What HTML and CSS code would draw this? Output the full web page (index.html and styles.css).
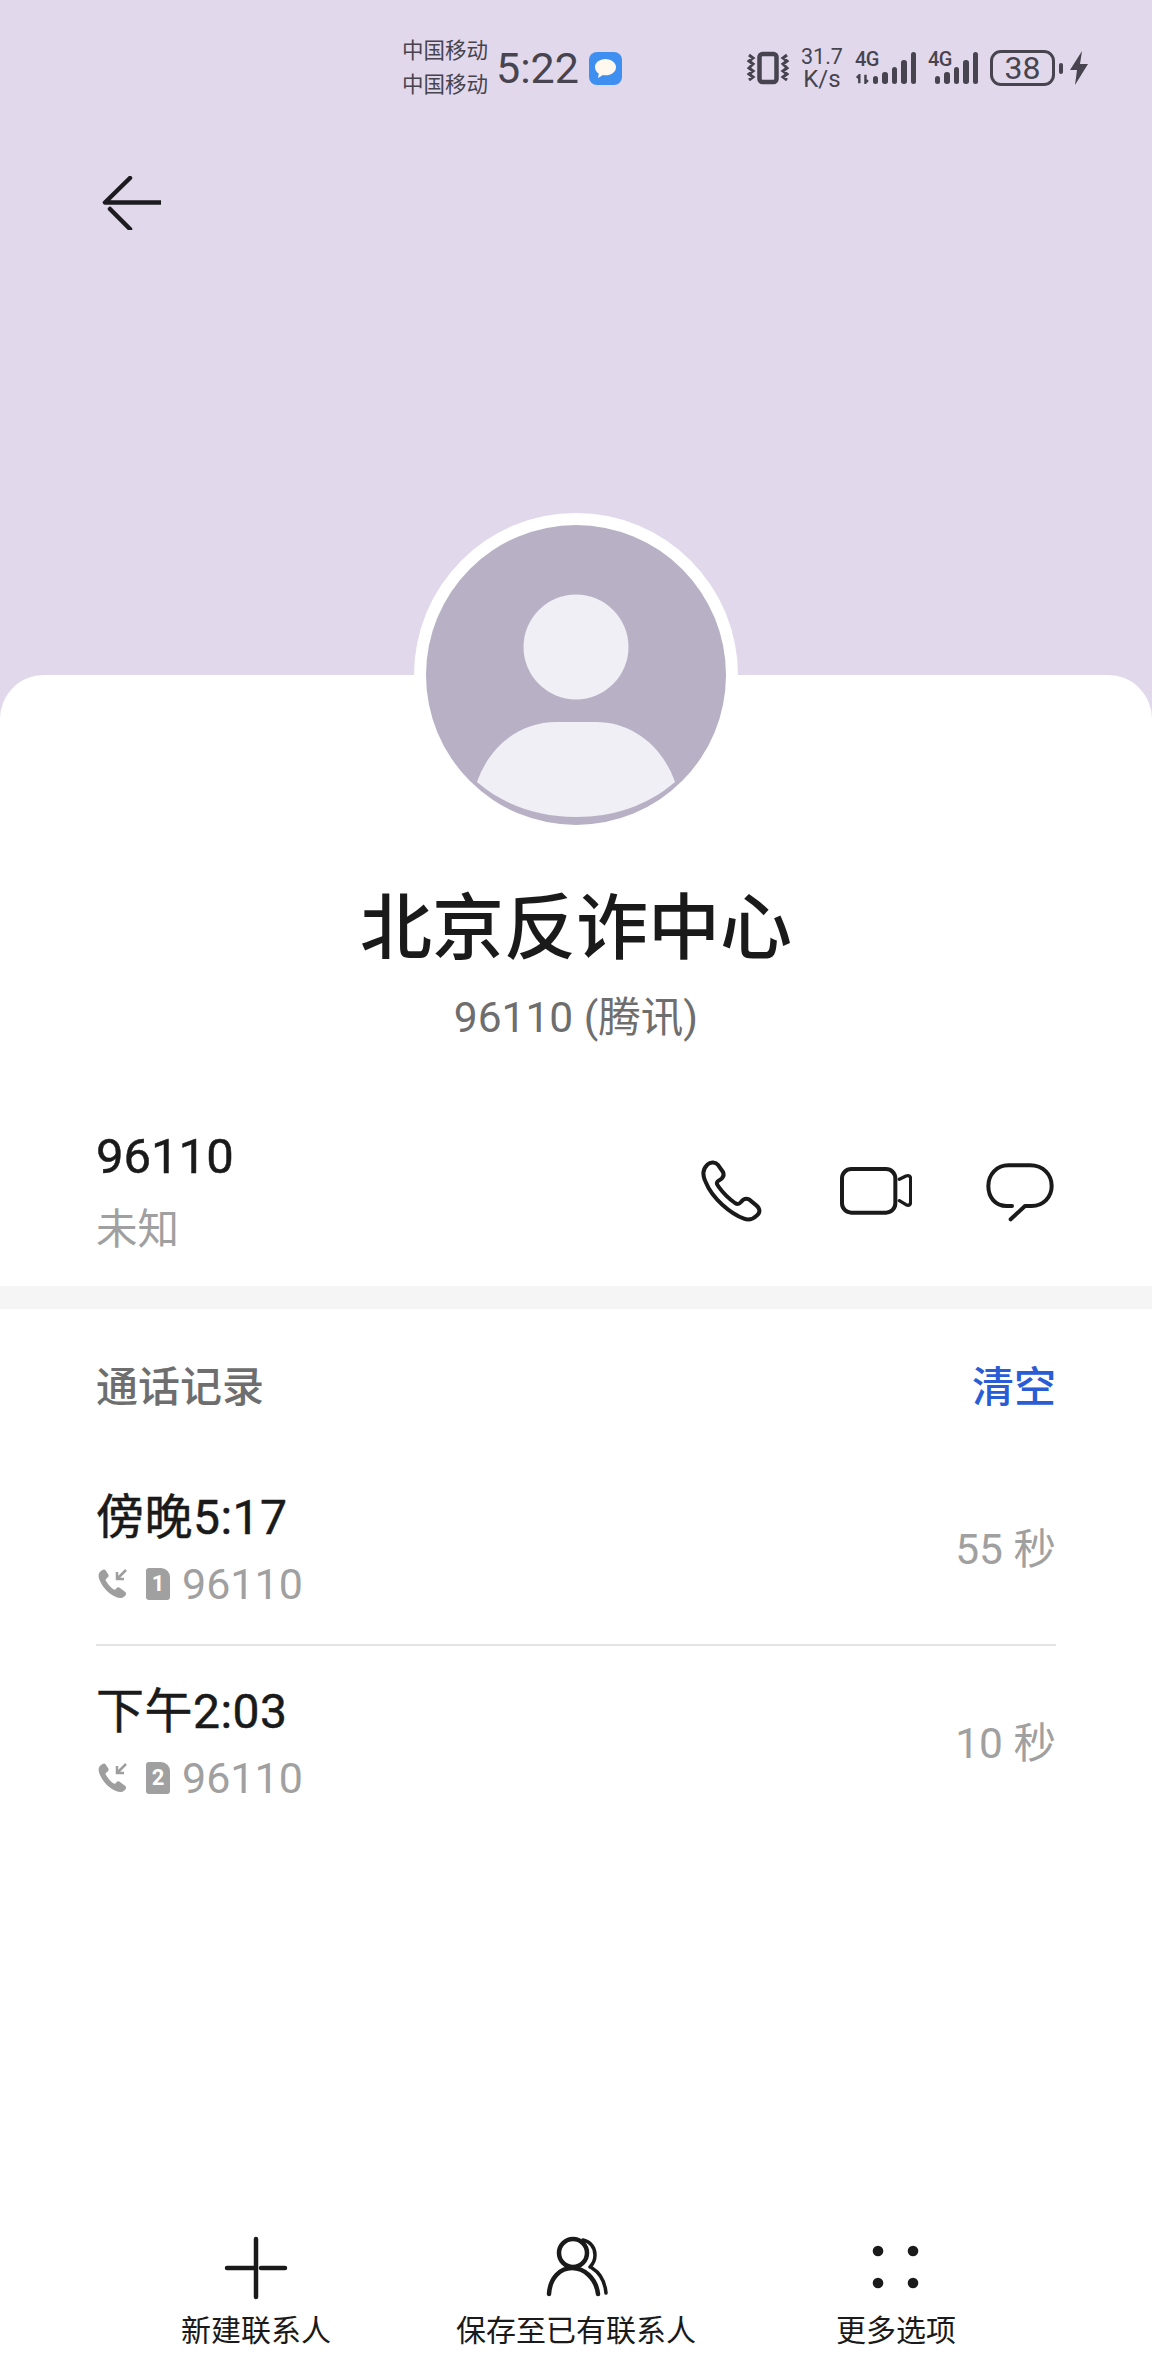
FILE: index.html
```html
<!DOCTYPE html>
<html lang="zh-CN">
<head>
<meta charset="utf-8">
<title>北京反诈中心</title>
<link rel="stylesheet" href="styles.css">
</head>
<body>
<div class="page">
  <header class="hero">
    <div class="status">
      <div class="carriers"><span>中国移动</span><span>中国移动</span></div>
      <span class="time">5:22</span>
      <svg class="msg" viewBox="0 0 33 33"><rect width="33" height="33" rx="8" fill="#3f8ff0"/><path d="M16.5 7C10.6 7 6 10.6 6 15.2c0 2.6 1.5 4.9 3.8 6.4L9 26l5-2.9c.8.2 1.6.2 2.5.2 5.9 0 10.5-3.6 10.500-8.100S22.400 7 16.500 7z" fill="#fff8ee"/></svg>
      <div class="sys">
        <svg class="vib" viewBox="0 0 42 34"><rect x="12.500" y="3" width="17" height="28" rx="3" fill="none" stroke="#47434f" stroke-width="4.500"/><path d="M2 4l4 3-4 3 4 3-4 4 4 3-4 3 4 3-4 3M40 4l-4 3 4 3-4 3 4 4-4 3 4 3-4 3 4 3" fill="none" stroke="#47434f" stroke-width="3"/></svg>
        <div class="speed"><span>31.7</span><span class="unit">K/s</span></div>
        <div class="sig sig-a">
          <span class="g">4G</span>
          <svg class="arrows" viewBox="0 0 26 16"><path d="M7 15V2L3 6M17 1v13l4-4" fill="none" stroke="#47434f" stroke-width="4"/></svg>
          <div class="bars"><i class="b1"></i><i class="b2"></i><i class="b3"></i><i class="b4"></i><i class="b5"></i></div>
        </div>
        <div class="sig sig-b">
          <span class="g">4G</span>
          <div class="bars"><i class="b1"></i><i class="b2"></i><i class="b3"></i><i class="b4"></i><i class="b5"></i></div>
        </div>
        <div class="batt"><span>38</span></div>
        <i class="tip"></i>
        <svg class="bolt" viewBox="0 0 18 34"><path d="M12 0L0 19h7L5 34 18 13h-8z" fill="#47434f"/></svg>
      </div>
    </div>
    <button class="back" aria-label="返回">
      <svg viewBox="0 0 60 54"><path d="M29 2L4 26.500H60M9 33L29 53" fill="none" stroke="#1d1b20" stroke-width="4.500" stroke-linecap="round" stroke-linejoin="round"/></svg>
    </button>
  </header>

  <main class="card">
    <div class="avatar">
      <svg viewBox="0 0 300 300">
        <circle cx="150" cy="150" r="150" fill="#b8b0c5"/>
        <circle cx="150" cy="122" r="52.500" fill="#f0eff5"/>
        <path d="M51 257C64 220 95 197 130 197h40c35 0 66 23 79 60-28 24-62 35-99 35s-71-11-99-35z" fill="#f0eff5"/>
      </svg>
    </div>
    <h1 class="name">北京反诈中心</h1>
    <p class="sub">96110 (腾讯)</p>

    <section class="contact">
      <div class="contact-text">
        <div class="num">96110</div>
        <div class="loc">未知</div>
      </div>
      <div class="actions">
        <svg viewBox="111 102 216 216"><path d="M145 128C155 118 170 120 178 130L192 150C196 158 194 164 188 170L176 178C172 182 174 188 178 193C190 210 210 230 228 243C236 248 240 247 246 240C252 232 260 228 270 232L292 250C304 260 304 272 294 280C284 290 270 296 255 290C215 275 160 230 140 180C128 155 132 140 145 128Z" fill="none" stroke="#1a1a1a" stroke-width="12" stroke-linejoin="round"/></svg>
        <svg viewBox="540 102 216 216"><rect x="546" y="141" width="160" height="131" rx="28" fill="none" stroke="#1a1a1a" stroke-width="12"/><path d="M718 172L738 162Q752 158 752 172V238Q752 254 738 248L718 236" fill="none" stroke="#1a1a1a" stroke-width="10" stroke-linecap="round" stroke-linejoin="round"/></svg>
        <svg viewBox="972 102 216 216"><path d="M1056 252H1040C1005 252 985 225 985 192C985 158 1010 130 1045 130H1110C1150 130 1175 158 1175 192C1175 225 1150 252 1115 252H1095L1052 292" fill="none" stroke="#1a1a1a" stroke-width="12" stroke-linecap="round" stroke-linejoin="round"/></svg>
      </div>
    </section>

    <div class="band"></div>

    <section class="log">
      <div class="log-head"><span class="log-title">通话记录</span><span class="clear">清空</span></div>
      <div class="log-row">
        <div>
          <div class="when">傍晚5:17</div>
          <div class="meta">
            <svg class="incall" viewBox="0 0 30 32"><path d="M3 3c-3 2-3 6-1 10 3 7 9 13 16 16 4 2 7 1 9-1 2-2 1-4-1-5l-4-3c-1-1-3-1-4 1-1 1-2 1-3 0-3-2-5-5-7-8-1-1 0-2 1-3 2-1 2-3 1-4L8 3C7 1 5 1 3 3z" fill="#9e9e9e"/><path d="M28 2L19 11M19 4v7h7" fill="none" stroke="#9e9e9e" stroke-width="2.500"/></svg>
            <span class="sim">1</span>
            <span class="dial">96110</span>
          </div>
        </div>
        <span class="dur">55 秒</span>
      </div>
      <div class="log-row last">
        <div>
          <div class="when">下午2:03</div>
          <div class="meta">
            <svg class="incall" viewBox="0 0 30 32"><path d="M3 3c-3 2-3 6-1 10 3 7 9 13 16 16 4 2 7 1 9-1 2-2 1-4-1-5l-4-3c-1-1-3-1-4 1-1 1-2 1-3 0-3-2-5-5-7-8-1-1 0-2 1-3 2-1 2-3 1-4L8 3C7 1 5 1 3 3z" fill="#9e9e9e"/><path d="M28 2L19 11M19 4v7h7" fill="none" stroke="#9e9e9e" stroke-width="2.500"/></svg>
            <span class="sim">2</span>
            <span class="dial">96110</span>
          </div>
        </div>
        <span class="dur">10 秒</span>
      </div>
    </section>

    <nav class="tabs">
      <div class="tab">
        <svg viewBox="0 0 64 64"><path d="M32 3V61M3 32H30M37 32H61" fill="none" stroke="#1a1a1a" stroke-width="4.500" stroke-linecap="round"/></svg>
        <span>新建联系人</span>
      </div>
      <div class="tab">
        <svg viewBox="0 0 64 64"><circle cx="29" cy="17" r="14" fill="none" stroke="#1a1a1a" stroke-width="4.500"/><path d="M5 58C6 42 16 32 28 32S52 42 54 58" fill="none" stroke="#1a1a1a" stroke-width="4.500" stroke-linecap="round"/><path d="M39 4C47 6 51 12 51 19C51 24 49 28 46 31M48 32C56 37 61 46 62 57" fill="none" stroke="#1a1a1a" stroke-width="3.500" stroke-linecap="round"/></svg>
        <span>保存至已有联系人</span>
      </div>
      <div class="tab">
        <svg viewBox="0 0 64 64"><g fill="#1a1a1a"><circle cx="14" cy="15" r="5.300"/><circle cx="49" cy="15" r="5.300"/><circle cx="14" cy="47" r="5.300"/><circle cx="49" cy="47" r="5.300"/></g></svg>
        <span>更多选项</span>
      </div>
    </nav>
  </main>
</div>
</body>
</html>
```

FILE: styles.css
```css
* { box-sizing: border-box; }
html, body { margin: 0; padding: 0; }
body {
  font-family: Roboto, "Noto Sans CJK SC", sans-serif;
  background: #e1d9eb;
  color: #1a1a1a;
}
.page { width: 1152px; height: 2376px; display: flex; flex-direction: column; overflow: hidden; }

.hero { height: 675px; flex: none; }
.status { display: flex; align-items: center; height: 136px; padding: 0 64px 0 402px; color: #47434f; }
.carriers { display: flex; flex-direction: column; font-size: 21.500px; line-height: 34px; width: 94px; flex: none; white-space: nowrap; }
.time { font-size: 43px; line-height: 50px; width: 93px; flex: none; }
.msg { width: 33px; height: 33px; flex: none; }
.sys { margin-left: auto; display: flex; align-items: center; }
.vib { width: 42px; height: 34px; flex: none; }
.speed { display: flex; flex-direction: column; align-items: center; font-size: 21.500px; line-height: 22px; width: 42px; margin-left: 12px; flex: none; }
.unit { font-size: 24px; }
.sig { position: relative; height: 34px; flex: none; }
.sig-a { width: 61px; margin-left: 12px; }
.sig-b { width: 50px; margin-left: 12px; }
.g { position: absolute; left: 0; top: -2px; font-size: 20px; line-height: 20px; font-weight: 500; letter-spacing: -0.5px; }
.arrows { position: absolute; left: 0; bottom: 1px; width: 16px; height: 10px; }
.bars { position: absolute; right: 0; bottom: 1px; display: flex; align-items: flex-end; gap: 4px; }
.bars i { display: block; width: 5.500px; border-radius: 2.750px; background: #47434f; }
.b1 { height: 8px; } .b2 { height: 12px; } .b3 { height: 17px; } .b4 { height: 24px; } .b5 { height: 32px; }
.batt { width: 65px; height: 36px; margin-left: 12px; border: 3px solid #47434f; border-radius: 11px; display: flex; align-items: center; justify-content: center; font-size: 32px; line-height: 28px; flex: none; }
.tip { display: block; width: 4px; height: 11px; margin-left: 4px; border-radius: 2px; background: #47434f; flex: none; }
.bolt { width: 18px; height: 34px; margin-left: 7px; flex: none; }

.back { display: block; margin: 40px 0 0 101px; padding: 0; border: 0; background: none; width: 60px; height: 54px; }
.back svg { display: block; width: 60px; height: 54px; }

.card { flex: 1; display: flex; flex-direction: column; background: #fff; border-radius: 44px 44px 0 0; min-height: 0; }
.avatar { width: 324px; height: 324px; margin: -162px auto 0; padding: 12px; border-radius: 50%; background: #fff; flex: none; }
.avatar svg { display: block; width: 300px; height: 300px; }

.name { margin: 52px 0 0; font-size: 72px; line-height: 80px; font-weight: 500; text-align: center; color: #1a1a1a; }
.sub { margin: 21px 0 0; font-size: 42.500px; line-height: 56px; text-align: center; color: #6e6e6e; }

.contact { display: flex; align-items: center; justify-content: space-between; padding: 0 96px; margin-top: 51px; height: 189px; flex: none; }
.num { font-size: 49px; line-height: 62px; font-weight: 400; -webkit-text-stroke: 0.5px #1a1a1a; color: #1a1a1a; }
.loc { font-size: 41.500px; line-height: 56px; margin-top: 14px; color: #a0a0a0; }
.actions { display: flex; gap: 72px; }
.actions svg { display: block; width: 72px; height: 72px; }

.band { height: 23px; background: #f5f5f5; flex: none; }

.log { padding: 0 96px; }
.log-head { display: flex; justify-content: space-between; align-items: center; height: 144px; padding-top: 4px; font-size: 42px; font-weight: 500; }
.log-title { color: #6e6e6e; }
.clear { color: #2a5cd6; }
.log-row { display: flex; justify-content: space-between; align-items: center; height: 193px; border-bottom: 2px solid #e4e4e4; }
.log-row.last { border-bottom: 0; }
.when { font-size: 48px; line-height: 62px; font-weight: 400; letter-spacing: 0.5px; -webkit-text-stroke: 0.5px #1a1a1a; color: #1a1a1a; }
.meta { display: flex; align-items: center; margin-top: 9px; height: 52px; }
.incall { width: 30px; height: 32px; flex: none; margin: 0 18px 0 2px; }
.sim { width: 24px; height: 32px; margin-right: 12px; flex: none; background: #a0a0a0; color: #fff; font-size: 22px; font-weight: 700; line-height: 32px; text-align: center; border-radius: 3px 9px 3px 3px; }
.dial { font-size: 43px; line-height: 52px; color: #a0a0a0; }
.dur { font-size: 42.500px; color: #a0a0a0; margin-bottom: 6px; }

.tabs { margin-top: auto; display: flex; padding: 0 96px 23px; }
.tab { flex: 1; display: flex; flex-direction: column; align-items: center; }
.tab svg { display: block; width: 64px; height: 64px; }
.tab span { margin-top: 9px; font-size: 30px; line-height: 44px; color: #1a1a1a; }
```
